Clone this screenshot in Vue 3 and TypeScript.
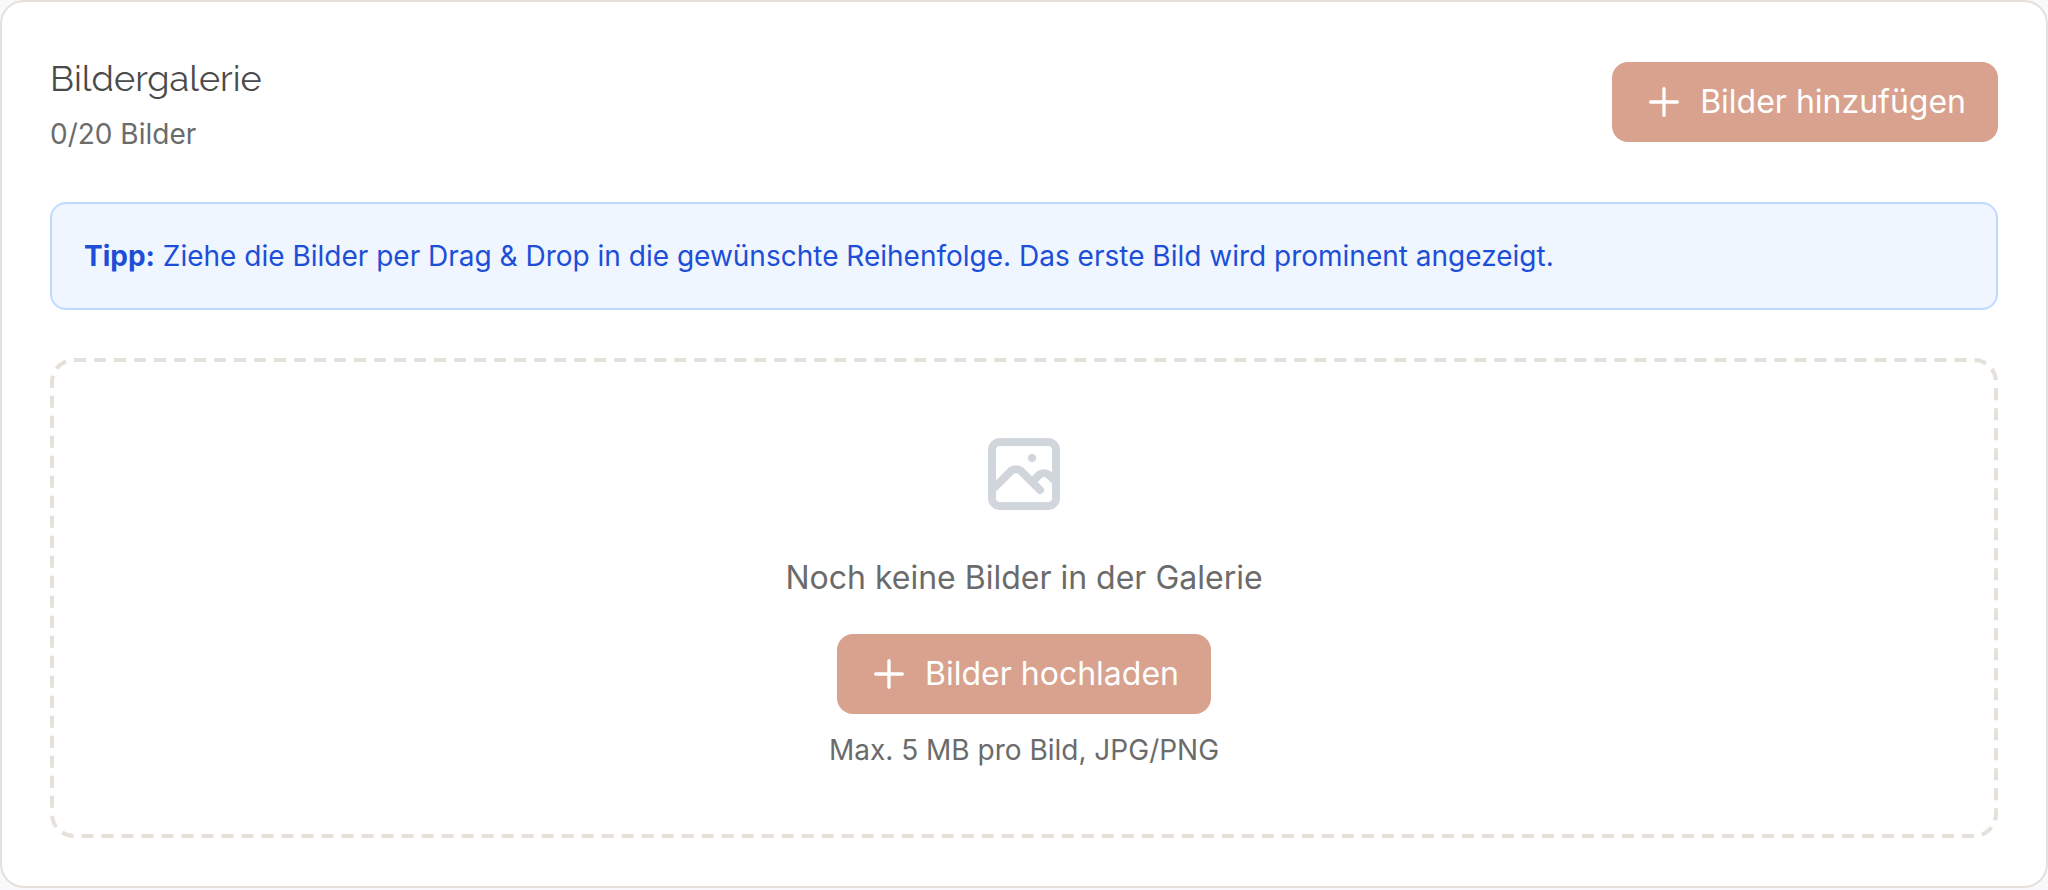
<script setup lang="ts">
const imageCount = 0
const maxImages = 20
</script>

<template>
  <section class="gallery" aria-labelledby="gallery-title">
    <header class="header">
      <div>
        <h3 id="gallery-title" class="title">Bildergalerie</h3>
        <p class="count">{{ imageCount }}/{{ maxImages }} Bilder</p>
      </div>
      <button type="button" class="button">
        <svg class="plus" viewBox="0 0 24 24" aria-hidden="true">
          <path d="M12 4v16m8-8H4" />
        </svg>
        Bilder hinzufügen
      </button>
    </header>

    <p class="tip">
      <strong>Tipp:</strong> Ziehe die Bilder per Drag &amp; Drop in die gewünschte Reihenfolge. Das erste Bild wird prominent angezeigt.
    </p>

    <div class="dropzone">
      <svg class="outline" aria-hidden="true">
        <rect x="2" y="2" rx="22" pathLength="4800" />
      </svg>
      <svg class="photo" viewBox="0 0 24 24" aria-hidden="true">
        <path
          d="M4 16l4.586-4.586a2 2 0 012.828 0L16 16m-2-2l1.586-1.586a2 2 0 012.828 0L20 14m-6-6h.01M6 20h12a2 2 0 002-2V6a2 2 0 00-2-2H6a2 2 0 00-2 2v12a2 2 0 002 2z"
        />
      </svg>
      <p class="empty">Noch keine Bilder in der Galerie</p>
      <button type="button" class="button">
        <svg class="plus" viewBox="0 0 24 24" aria-hidden="true">
          <path d="M12 4v16m8-8H4" />
        </svg>
        Bilder hochladen
      </button>
      <p class="hint">Max. 5 MB pro Bild, JPG/PNG</p>
    </div>
  </section>
</template>

<style>
body {
  background: #f9f8fb;
}
</style>

<style scoped>
.gallery {
  box-sizing: border-box;
  padding: 48px;
  border: 2px solid #e5e0da;
  border-radius: 24px;
  background: #ffffff;
  color: #6b6b6b;
  font-family: Inter, "Liberation Sans", sans-serif;
  font-size: 28px;
  line-height: 40px;
}

p,
h3 {
  margin: 0;
}

.header {
  display: flex;
  align-items: center;
  justify-content: space-between;
  gap: 32px;
  margin-bottom: 48px;
}

.title {
  margin-bottom: 8px;
  color: #4a4a4a;
  font-family: Raleway, Lato, sans-serif;
  font-size: 36px;
  font-weight: 400;
  line-height: 56px;
}

.button {
  display: inline-flex;
  align-items: center;
  gap: 16px;
  padding: 16px 32px;
  border: 0;
  border-radius: 16px;
  background: #d8a28e;
  color: #ffffff;
  font-family: inherit;
  font-size: 32px;
  line-height: 48px;
  white-space: nowrap;
  cursor: pointer;
}

.plus {
  width: 40px;
  height: 40px;
}

.plus,
.photo,
.outline {
  fill: none;
  stroke: currentColor;
  stroke-width: 2;
  stroke-linecap: round;
  stroke-linejoin: round;
}

.tip {
  margin-bottom: 48px;
  padding: 32px;
  border: 2px solid #bedbff;
  border-radius: 16px;
  background: #eff6ff;
  color: #1d4ed8;
}

.tip strong {
  font-weight: 700;
}

.dropzone {
  position: relative;
  display: flex;
  flex-direction: column;
  align-items: center;
  padding: 68px;
  text-align: center;
}

.outline {
  position: absolute;
  inset: 0;
  width: 100%;
  height: 100%;
  color: #e5e0da;
  stroke-width: 4;
  stroke-linecap: butt;
  stroke-dasharray: 12 8;
  pointer-events: none;
}

.outline rect {
  width: calc(100% - 4px);
  height: calc(100% - 4px);
}

.photo {
  width: 96px;
  height: 96px;
  margin-bottom: 32px;
  color: #d1d5dc;
}

.empty {
  margin-bottom: 32px;
  font-size: 32px;
  line-height: 48px;
}

.hint {
  margin-top: 16px;
}
</style>
